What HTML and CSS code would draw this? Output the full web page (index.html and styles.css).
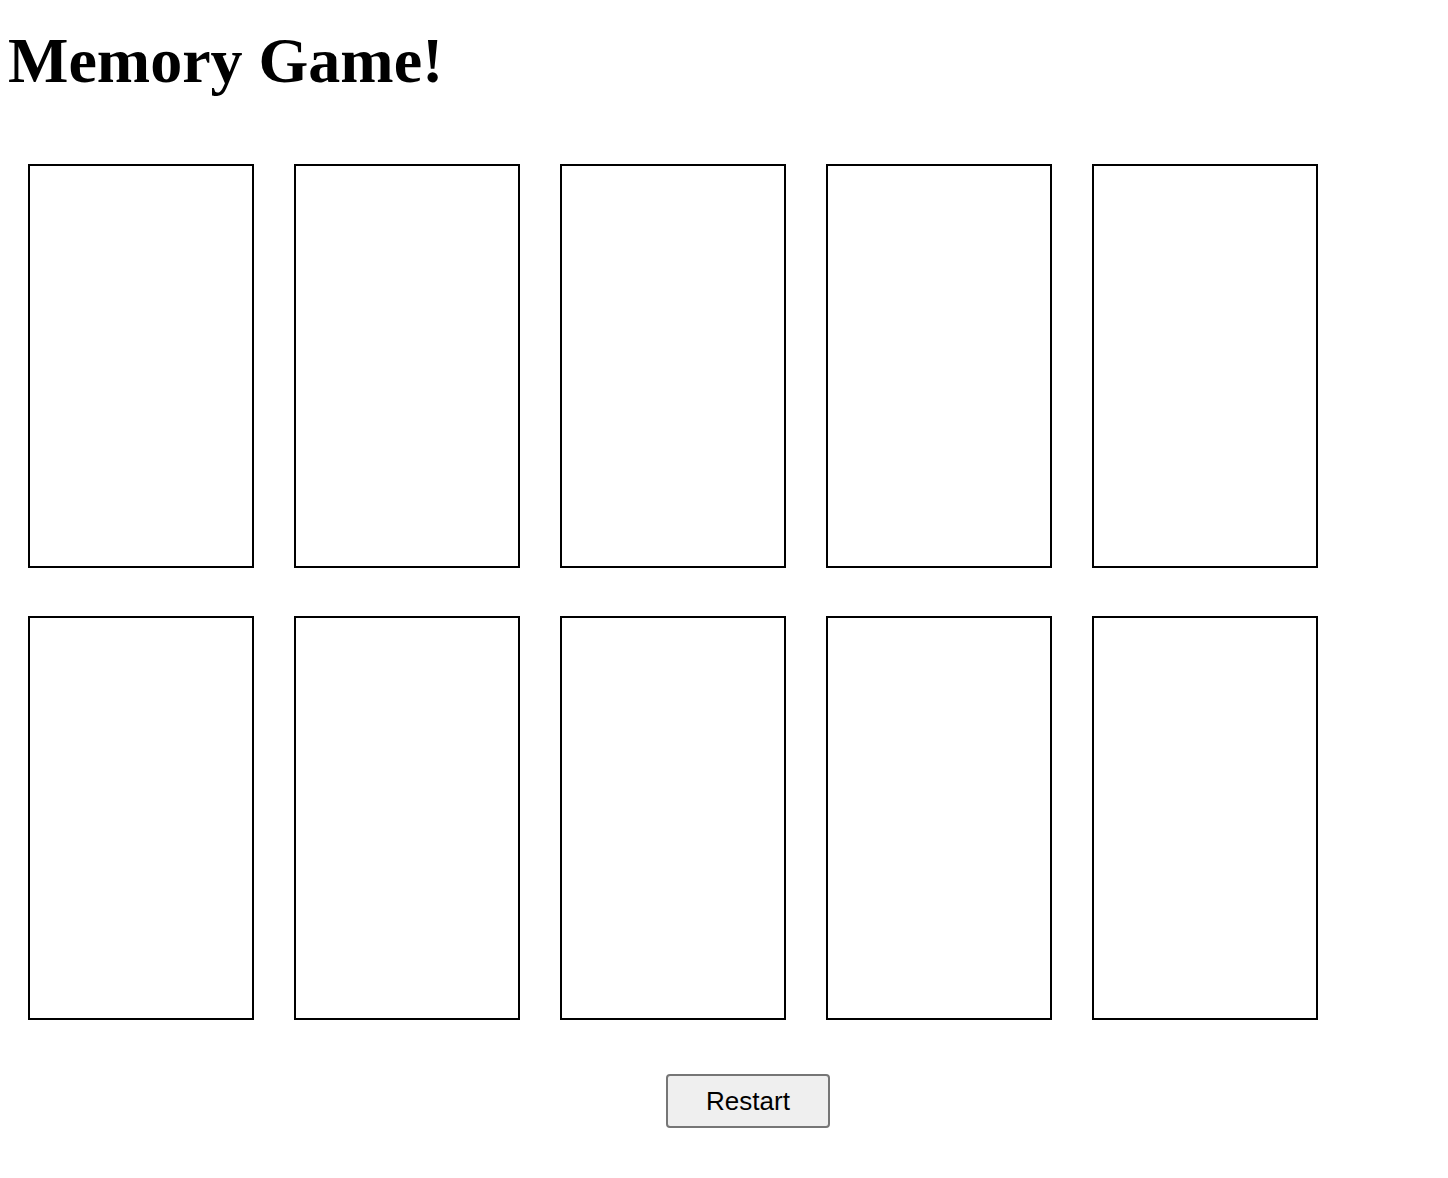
FILE: index.html
```html
<!DOCTYPE html>
<html>
<head>
<meta charset="utf-8">
<title>Memory Game</title>
<link rel="stylesheet" href="styles.css">
</head>
<body>
<h1 class="title">Memory Game!</h1>
<div class="board">
  <div class="card"></div>
  <div class="card"></div>
  <div class="card"></div>
  <div class="card"></div>
  <div class="card"></div>
  <div class="card"></div>
  <div class="card"></div>
  <div class="card"></div>
  <div class="card"></div>
  <div class="card"></div>
</div>
<div class="controls">
  <button class="restart">Restart</button>
</div>
</body>
</html>
```
FILE: styles.css
```css
body {
  margin: 8px;
  background: #fff;
  color: #000;
}
.title {
  font-family: "Liberation Serif", "Times New Roman", serif;
  font-weight: bold;
  font-size: 64px;
  line-height: normal;
  margin: 16px 0 0 0;
}
.board {
  display: grid;
  grid-template-columns: repeat(5, 226px);
  column-gap: 40px;
  row-gap: 48px;
  padding-left: 20px;
  margin-top: 66px;
}
.card {
  box-sizing: border-box;
  width: 226px;
  height: 404px;
  border: 2px solid #000;
  background: #fff;
}
.controls {
  display: flex;
  padding-left: 658px;
  margin-top: 54px;
}
.restart {
  box-sizing: border-box;
  width: 164px;
  height: 54px;
  font-family: "Liberation Sans", Arial, sans-serif;
  font-size: 26px;
  color: #000;
  background: #efefef;
  border: 2px solid #767676;
  border-radius: 4px;
  padding: 0;
}
```
